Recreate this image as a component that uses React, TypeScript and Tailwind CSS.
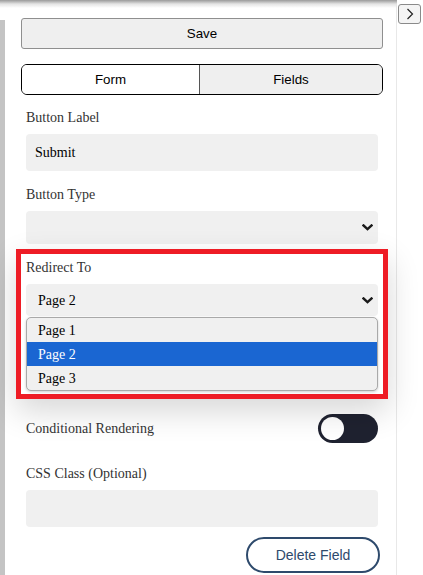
import { ReactNode } from 'react';

const serif = "font-['Liberation_Serif','Times_New_Roman',serif]";
const sans = "font-['Liberation_Sans',Arial,sans-serif]";

function Label({ children }: { children: ReactNode }) {
  return <div className={`${serif} text-[14px] leading-[20px] text-[#333]`}>{children}</div>;
}

function Chevron() {
  return (
    <svg width="11" height="7" viewBox="0 0 11 7" fill="none" aria-hidden>
      <path d="M1.5 1.5 L5.5 5.2 L9.5 1.5" stroke="#1a1a1a" strokeWidth="2.4" strokeLinecap="square" />
    </svg>
  );
}

function SelectBox({ value, h = 'h-[33px]' }: { value?: string; h?: string }) {
  return (
    <div className={`${h} ${serif} flex items-center justify-between rounded-[4px] bg-[#f0f0f0] pl-[12px] pr-[5px] text-[14px] text-black`}>
      <span>{value}</span>
      <Chevron />
    </div>
  );
}

export default function App() {
  const pages = ['Page 1', 'Page 2', 'Page 3'];

  return (
    <div className="relative flex h-[575px] w-[423px] overflow-hidden bg-white">
      {/* top shadow from the header above */}
      <div className="pointer-events-none absolute left-0 top-0 z-20 h-[8px] w-[397px] bg-gradient-to-b from-[#9a9a9a] via-[#e4e4e4] to-transparent" />

      {/* side panel */}
      <div className="flex w-[397px] border-r border-[#e8e8e8]">
        {/* scrollbar */}
        <div className="w-[6px] shrink-0 pt-[20px] pr-[1px]">
          <div className="h-full bg-[#c4c4c4]" />
        </div>

        <div className="w-[390px] pl-[15px] pr-[13px] pt-[18px]">
          <button className={`${sans} h-[31px] w-full rounded-[3px] border border-[#8f8f8f] bg-[#efefef] text-[13.33px] text-black`}>
            Save
          </button>

          <div className={`${sans} mt-[15px] flex h-[31px] overflow-hidden rounded-[6px] border border-black text-[13.33px] text-black`}>
            <button className="w-[177px] bg-white">Form</button>
            <button className="flex-1 border-l border-[#555] bg-[#efefef]">Fields</button>
          </div>

          <div className="px-[5px]">
            <div className="mt-[13px]">
              <Label>Button Label</Label>
              <div className={`${serif} mt-[6px] flex h-[37px] items-center rounded-[4px] bg-[#f0f0f0] px-[9px] text-[14px] text-black`}>
                Submit
              </div>
            </div>

            <div className="mt-[14px]">
              <Label>Button Type</Label>
              <div className="mt-[6px]">
                <SelectBox />
              </div>
            </div>

            {/* highlighted redirect field */}
            <div className="relative z-10 -mx-[10px] mt-[5px] border-[5px] border-[#ee1c25] bg-white px-[5px] pb-[3px] pt-[4px] shadow-[0_12px_30px_rgba(0,0,0,0.16)]">
              <Label>Redirect To</Label>
              <div className="mt-[6px]">
                <SelectBox value="Page 2" h="h-[32px]" />
              </div>
              <div className={`${serif} mt-[1px] overflow-hidden rounded-[5px] border border-[#a9a9a9] bg-[#f0f0f0] text-[14px] shadow-[0_1px_3px_rgba(0,0,0,0.2)]`}>
                {pages.map((p) => (
                  <div
                    key={p}
                    className={`flex h-[24px] items-center px-[11px] ${p === 'Page 2' ? 'bg-[#1a66d2] text-white' : 'text-black'}`}
                  >
                    {p}
                  </div>
                ))}
              </div>
            </div>

            <div className="mt-[15px] flex h-[29px] items-center justify-between">
              <Label>Conditional Rendering</Label>
              <div className="flex h-[29px] w-[60px] items-center rounded-full bg-[#1f2230] px-[3px]">
                <div className="h-[23px] w-[23px] rounded-full bg-white" />
              </div>
            </div>

            <div className="mt-[21px]">
              <Label>CSS Class (Optional)</Label>
              <div className="mt-[6px] h-[37px] rounded-[4px] bg-[#f0f0f0]" />
            </div>

            <div className="-mr-[2px] mt-[10px] flex justify-end">
              <button className={`${sans} h-[36px] w-[134px] rounded-full border-2 border-[#2e4a6c] bg-white text-[14px] text-[#2e4a6c]`}>
                Delete Field
              </button>
            </div>
          </div>
        </div>
      </div>

      {/* collapse toggle */}
      <div className="flex-1 pl-[1px] pt-[4px]">
        <button className="flex h-[20px] w-[23px] items-center justify-center rounded-[3px] border border-[#8a8a8a] bg-[#f4f4f4]">
          <svg width="8" height="12" viewBox="0 0 8 12" fill="none" aria-hidden>
            <path d="M1.5 1 L6.5 6 L1.5 11" stroke="#222" strokeWidth="1.2" />
          </svg>
        </button>
      </div>
    </div>
  );
}
